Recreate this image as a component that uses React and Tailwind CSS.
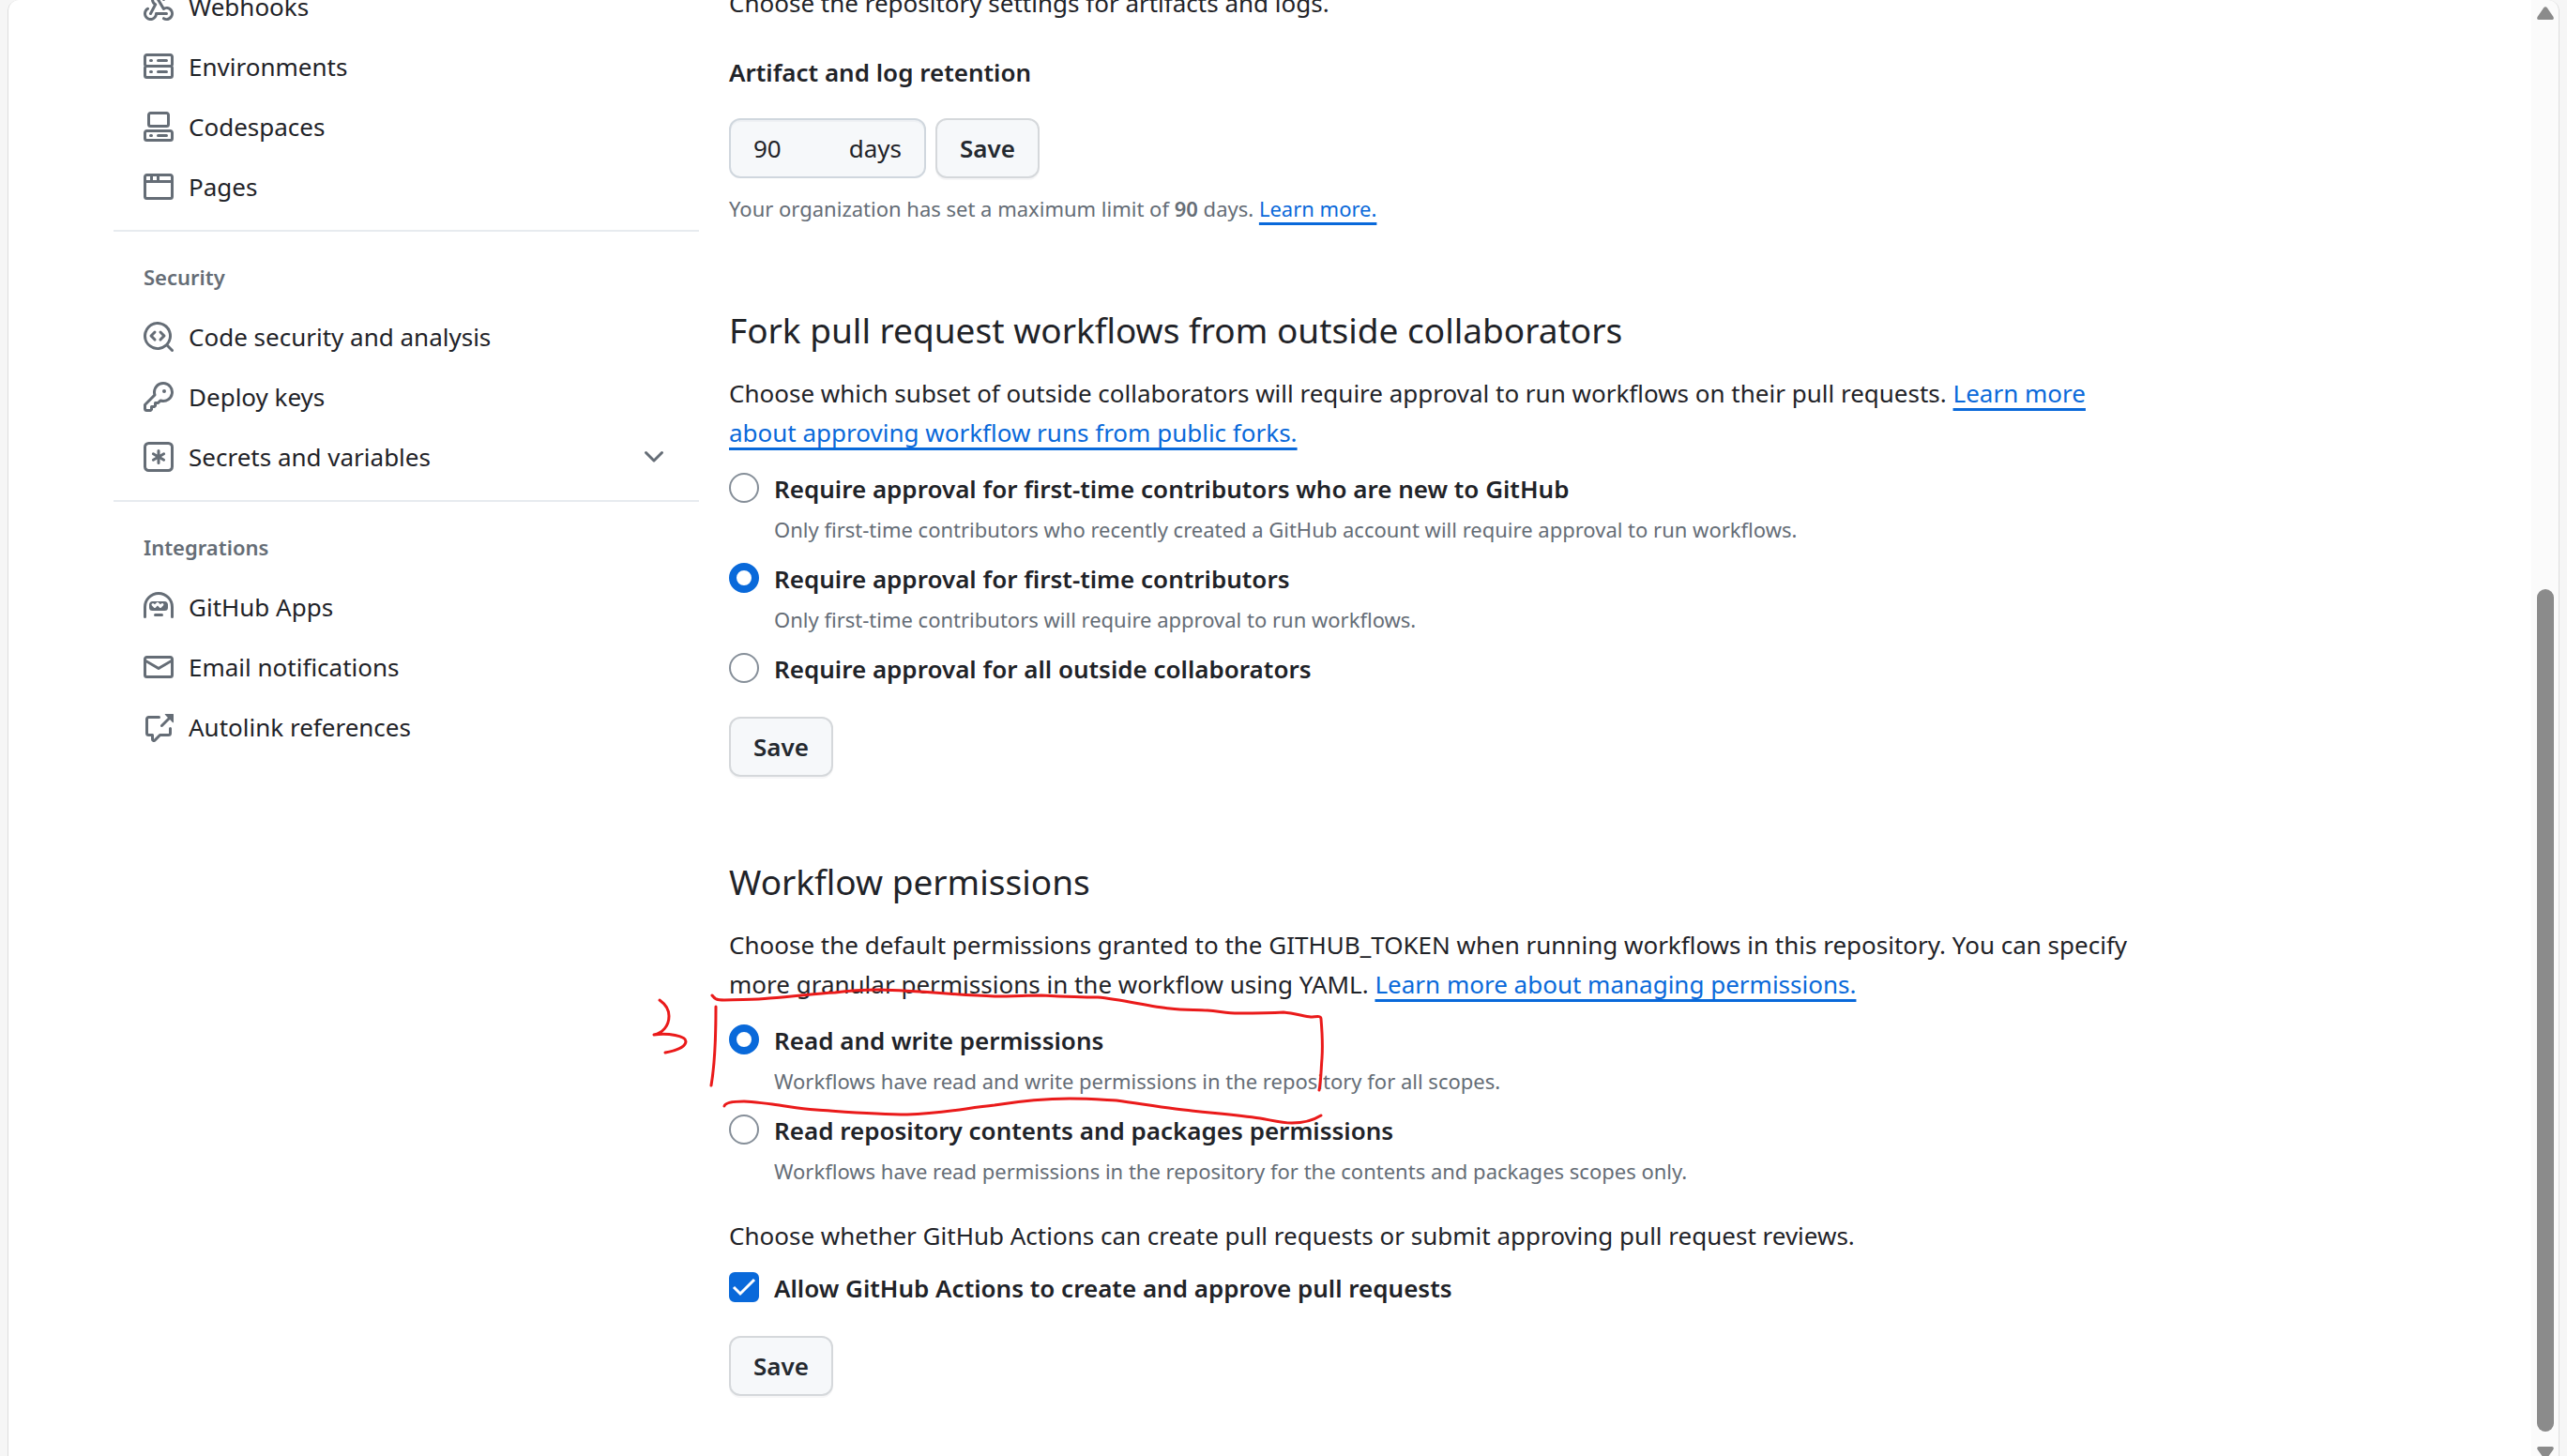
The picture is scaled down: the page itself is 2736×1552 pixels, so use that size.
const ICONS = {
  webhook: [
    "M5.5 4.25a2.25 2.25 0 0 1 4.5 0 .75.75 0 0 0 1.5 0 3.75 3.75 0 1 0-6.14 2.889l-2.272 4.258a.75.75 0 0 0 1.324.706L7 7.25a.75.75 0 0 0-.309-1.015A2.25 2.25 0 0 1 5.5 4.25Z",
    "M7.364 3.607a.75.75 0 0 1 1.03.257l2.608 4.349a3.75 3.75 0 1 1-.628 6.785.75.75 0 0 1 .752-1.299 2.25 2.25 0 1 0-.033-3.88.75.75 0 0 1-1.03-.256L7.107 4.636a.75.75 0 0 1 .257-1.03Z",
    "M2.9 8.776A.75.75 0 0 1 2.625 9.8 2.25 2.25 0 1 0 6 11.75a.75.75 0 0 1 .75-.751h5.5a.75.75 0 0 1 0 1.5H7.425a3.751 3.751 0 1 1-5.55-3.998.75.75 0 0 1 1.024.274Z",
  ],
  server: [
    "M1.75 1h12.5c.966 0 1.75.784 1.75 1.75v4c0 .372-.116.717-.314 1 .198.283.314.628.314 1v4a1.75 1.75 0 0 1-1.75 1.75H1.75A1.75 1.75 0 0 1 0 12.75v-4c0-.358.109-.707.314-1a1.739 1.739 0 0 1-.314-1v-4C0 1.784.784 1 1.75 1ZM1.5 2.75v4c0 .138.112.25.25.25h12.5a.25.25 0 0 0 .25-.25v-4a.25.25 0 0 0-.25-.25H1.75a.25.25 0 0 0-.25.25Zm.25 5.75a.25.25 0 0 0-.25.25v4c0 .138.112.25.25.25h12.5a.25.25 0 0 0 .25-.25v-4a.25.25 0 0 0-.25-.25ZM7 4.75A.75.75 0 0 1 7.75 4h4.5a.75.75 0 0 1 0 1.5h-4.5A.75.75 0 0 1 7 4.75ZM7.75 10h4.5a.75.75 0 0 1 0 1.5h-4.5a.75.75 0 0 1 0-1.5ZM3 4.75A.75.75 0 0 1 3.75 4h.5a.75.75 0 0 1 0 1.5h-.5A.75.75 0 0 1 3 4.75ZM3.75 10h.5a.75.75 0 0 1 0 1.5h-.5a.75.75 0 0 1 0-1.5Z",
  ],
  codespaces: [
    "M0 11.25c0-.966.784-1.75 1.75-1.75h12.5c.966 0 1.75.784 1.75 1.75v3A1.75 1.75 0 0 1 14.25 16H1.75A1.75 1.75 0 0 1 0 14.25Zm2-9.5C2 .784 2.784 0 3.75 0h8.5C13.216 0 14 .784 14 1.75v5a1.75 1.75 0 0 1-1.75 1.75h-8.5A1.75 1.75 0 0 1 2 6.75Zm1.75-.25a.25.25 0 0 0-.25.25v5c0 .138.112.25.25.25h8.5a.25.25 0 0 0 .25-.25v-5a.25.25 0 0 0-.25-.25Zm-2 9.5a.25.25 0 0 0-.25.25v3c0 .138.112.25.25.25h12.5a.25.25 0 0 0 .25-.25v-3a.25.25 0 0 0-.25-.25Z",
    "M7 12.75a.75.75 0 0 1 .75-.75h4.5a.75.75 0 0 1 0 1.5h-4.5a.75.75 0 0 1-.75-.75Zm-4 0a.75.75 0 0 1 .75-.75h.5a.75.75 0 0 1 0 1.5h-.5a.75.75 0 0 1-.75-.75Z",
  ],
  browser: [
    "M0 2.75C0 1.784.784 1 1.75 1h12.5c.966 0 1.75.784 1.75 1.75v10.5A1.75 1.75 0 0 1 14.25 15H1.75A1.75 1.75 0 0 1 0 13.25ZM14.5 6h-13v7.25c0 .138.112.25.25.25h12.5a.25.25 0 0 0 .25-.25Zm-6-3.5v2h6V2.75a.25.25 0 0 0-.25-.25ZM5 2.5v2h2v-2Zm-3.25 0a.25.25 0 0 0-.25.25V4.5h2v-2Z",
  ],
  codescan: [
    "M8.47 4.97a.75.75 0 0 0 0 1.06L9.94 7.5 8.47 8.97a.75.75 0 1 0 1.06 1.06l2-2a.75.75 0 0 0 0-1.06l-2-2a.75.75 0 0 0-1.06 0ZM6.53 6.03a.75.75 0 0 0-1.06-1.06l-2 2a.75.75 0 0 0 0 1.06l2 2a.75.75 0 1 0 1.06-1.06L5.06 7.5l1.47-1.47Z",
    "M12.246 13.307a7.501 7.501 0 1 1 1.06-1.06l2.474 2.473a.749.749 0 1 1-1.06 1.06l-2.474-2.473ZM1.5 7.5a6.002 6.002 0 0 0 3.608 5.504 6.002 6.002 0 0 0 6.486-1.117.748.748 0 0 1 .292-.293A6 6 0 1 0 1.5 7.5Z",
  ],
  key: [
    "M10.5 0a5.499 5.499 0 1 1-1.288 10.848l-.932.932a.749.749 0 0 1-.53.22H7v.75a.749.749 0 0 1-.22.53l-.5.5a.749.749 0 0 1-.53.22H5v.75a.749.749 0 0 1-.22.53l-.5.5a.749.749 0 0 1-.53.22h-2A1.75 1.75 0 0 1 0 14.25v-2c0-.199.079-.389.22-.53l4.932-4.932A5.5 5.5 0 0 1 10.5 0Zm-4 5.5c-.001.431.069.86.205 1.269a.75.75 0 0 1-.181.768L1.5 12.56v1.69c0 .138.112.25.25.25h1.69l.06-.06v-1.19a.75.75 0 0 1 .75-.75h1.19l.06-.06v-1.19a.75.75 0 0 1 .75-.75h1.19l1.023-1.025a.75.75 0 0 1 .768-.18A4 4 0 1 0 6.5 5.5ZM11 6a1 1 0 1 1 0-2 1 1 0 0 1 0 2Z",
  ],
  asterisk: [
    "M0 2.75A2.75 2.75 0 0 1 2.75 0h10.5A2.75 2.75 0 0 1 16 2.75v10.5A2.75 2.75 0 0 1 13.25 16H2.75A2.75 2.75 0 0 1 0 13.25ZM2.75 1.5c-.69 0-1.25.56-1.25 1.25v10.5c0 .69.56 1.25 1.25 1.25h10.5c.69 0 1.25-.56 1.25-1.25V2.75c0-.69-.56-1.25-1.25-1.25Z",
    "M8 4a.75.75 0 0 1 .75.75V6.7l1.69-.975a.75.75 0 0 1 .75 1.3L9.5 8l1.69.976a.75.75 0 0 1-.75 1.298L8.75 9.3v1.951a.75.75 0 0 1-1.5 0V9.299l-1.69.976a.75.75 0 0 1-.75-1.3L6.5 8l-1.69-.975a.75.75 0 0 1 .75-1.3l1.69.976V4.75A.75.75 0 0 1 8 4Z",
  ],
  hubot: [
    "M0 8a8 8 0 1 1 16 0v5.25a.75.75 0 0 1-1.5 0V8a6.5 6.5 0 1 0-13 0v5.25a.75.75 0 0 1-1.5 0Zm5.5 4.25a.75.75 0 0 1 .75-.75h3.5a.75.75 0 0 1 0 1.5h-3.5a.75.75 0 0 1-.75-.75ZM3 6.75C3 5.784 3.784 5 4.75 5h6.5c.966 0 1.75.784 1.75 1.75v1.5A1.75 1.75 0 0 1 11.25 10h-6.5A1.75 1.75 0 0 1 3 8.25Zm1.47-.53a.75.75 0 0 0 0 1.06l.97.97a.75.75 0 0 0 1.06 0l.97-.97.97.97a.75.75 0 0 0 1.06 0l.97-.97a.749.749 0 0 0-.326-1.275.749.749 0 0 0-.734.215l-.44.44-.97-.97a.75.75 0 0 0-1.06 0l-.97.97-.44-.44a.75.75 0 0 0-1.06 0Z",
  ],
  mail: [
    "M1.75 2h12.5c.966 0 1.75.784 1.75 1.75v8.5A1.75 1.75 0 0 1 14.25 14H1.75A1.75 1.75 0 0 1 0 12.25v-8.5C0 2.784.784 2 1.75 2ZM1.5 12.251c0 .138.112.25.25.25h12.5a.25.25 0 0 0 .25-.25V5.809L8.38 9.397a.75.75 0 0 1-.76 0L1.5 5.809v6.442Zm13-8.181v-.32a.25.25 0 0 0-.25-.25H1.75a.25.25 0 0 0-.25.25v.32L8 7.88Z",
  ],
  crossReference: [
    "M2.75 3.5a.25.25 0 0 0-.25.25v7.5c0 .138.112.25.25.25h2a.75.75 0 0 1 .75.75v2.19l2.72-2.72a.749.749 0 0 1 .53-.22h4.5a.25.25 0 0 0 .25-.25v-2.5a.75.75 0 0 1 1.5 0v2.5A1.75 1.75 0 0 1 13.25 13H9.06l-2.573 2.573A1.458 1.458 0 0 1 4 14.543V13H2.75A1.75 1.75 0 0 1 1 11.25v-7.5C1 2.784 1.784 2 2.75 2h5.5a.75.75 0 0 1 0 1.5ZM16 1.25v4.146a.25.25 0 0 1-.427.177L14.03 4.03l-3.75 3.75a.749.749 0 0 1-1.275-.326.749.749 0 0 1 .215-.734l3.75-3.75-1.543-1.543A.25.25 0 0 1 11.604 1h4.146a.25.25 0 0 1 .25.25Z",
  ],
  chevron: [
    "M12.78 5.22a.749.749 0 0 1 0 1.06l-4.25 4.25a.749.749 0 0 1-1.06 0L3.22 6.28a.749.749 0 1 1 1.06-1.06L8 8.939l3.72-3.719a.749.749 0 0 1 1.06 0Z",
  ],
};

function Icon({ name }) {
  return (
    <svg viewBox="0 0 16 16" className="size-8 shrink-0 fill-[#656d76]" aria-hidden="true">
      {ICONS[name].map((d) => (
        <path key={d} d={d} />
      ))}
    </svg>
  );
}

const NAV = [
  {
    items: [
      ["webhook", "Webhooks"],
      ["server", "Environments"],
      ["codespaces", "Codespaces"],
      ["browser", "Pages"],
    ],
  },
  {
    title: "Security",
    items: [
      ["codescan", "Code security and analysis"],
      ["key", "Deploy keys"],
      ["asterisk", "Secrets and variables", true],
    ],
  },
  {
    title: "Integrations",
    items: [
      ["hubot", "GitHub Apps"],
      ["mail", "Email notifications"],
      ["crossReference", "Autolink references"],
    ],
  },
];

function NavItem({ icon, label, expandable }) {
  const row = "flex h-16 w-full items-center gap-4 px-8 text-left";
  const content = (
    <>
      <Icon name={icon} />
      <span className="grow">{label}</span>
    </>
  );
  return (
    <li>
      {expandable ? (
        <button type="button" aria-expanded="false" className={row}>
          {content}
          <Icon name="chevron" />
        </button>
      ) : (
        <a href="#" className={row}>
          {content}
        </a>
      )}
    </li>
  );
}

function Sidebar() {
  return (
    <nav aria-label="Repository settings" className="-mt-[25px] w-[624px] shrink-0">
      {NAV.map(({ title, items }) => (
        <section key={items[0][1]}>
          {title && (
            <h3 className="mt-[14px] border-t-2 border-[#e7ebef] px-8 pt-8 pb-4 text-[22px] leading-8 font-semibold text-[#656d76]">
              {title}
            </h3>
          )}
          <ul>
            {items.map(([icon, label, expandable]) => (
              <NavItem key={label} icon={icon} label={label} expandable={expandable} />
            ))}
          </ul>
        </section>
      ))}
    </nav>
  );
}

function Link({ children }) {
  return (
    <a href="#" className="text-[#0969da] underline decoration-[3px] underline-offset-[6px]">
      {children}
    </a>
  );
}

function SaveButton() {
  return (
    <button
      type="submit"
      className="h-16 rounded-xl border-2 border-[#d5d8db] bg-[#f6f8fa] px-6 font-semibold text-[#24292f] shadow-[0_2px_0_#1f23280a]"
    >
      Save
    </button>
  );
}

function RadioOption({ name, label, note, checked }) {
  return (
    <div className="flex gap-4">
      <input
        type="radio"
        id={label}
        name={name}
        defaultChecked={checked}
        className="mt-1 size-8 shrink-0 appearance-none rounded-full border-2 border-[#868f99] bg-white checked:border-8 checked:border-[#0969da]"
      />
      <div>
        <label htmlFor={label} className="block font-semibold">
          {label}
        </label>
        {note && <p className="mt-1 mb-[14px] text-[22px] leading-9 text-[#656d76]">{note}</p>}
      </div>
    </div>
  );
}

function SectionTitle({ children }) {
  return <h2 className="mt-[82px] mb-4 text-[37px] leading-[60px]">{children}</h2>;
}

/* Hand-drawn step number and frame around the first permission option. */
function PenMarks() {
  return (
    <svg
      viewBox="690 1050 730 160"
      className="pointer-events-none absolute -top-10 left-[-87px] h-[160px] w-[730px] fill-none stroke-[#ea1a1a]"
      strokeWidth="3"
      strokeLinecap="round"
      strokeLinejoin="round"
      aria-hidden="true"
    >
      <path d="M703 1068C710 1073 713 1079 713 1085C713 1096 706 1103 697 1105C712 1103 731 1106 731 1112C731 1118 720 1122 709 1124" />
      <path d="M763 1075C763 1105 762 1136 758 1159" />
      <path d="M759 1063C762 1067 764 1068 772 1068C790 1067 805 1068 820 1066C850 1064 868 1061 890 1060C910 1057 925 1057 937 1057C985 1058 1020 1063 1060 1064C1080 1064 1095 1063 1110 1063C1130 1064 1152 1065 1170 1065C1195 1067 1225 1075 1247 1077C1262 1079 1275 1078 1287 1079C1300 1080 1308 1082 1320 1082C1340 1082 1352 1082 1368 1081C1378 1082 1390 1085 1397 1086C1402 1086 1408 1084 1408 1088C1409 1100 1410 1115 1409 1130C1408 1142 1408 1155 1406 1164" />
      <path d="M772 1181C773 1177 784 1176 793 1176C803 1176 812 1178 823 1179C840 1181 850 1184 870 1185C900 1187 935 1190 967 1190C1005 1189 1030 1183 1060 1180C1085 1176 1110 1173 1140 1173C1160 1173 1172 1174 1190 1175C1212 1178 1230 1181 1253 1184C1285 1188 1315 1190 1343 1194C1355 1196 1366 1199 1377 1199C1390 1199 1400 1196 1408 1191" />
    </svg>
  );
}

function Main() {
  return (
    <main className="-mt-[18px] max-w-[1512px] grow">
      <p>Choose the repository settings for artifacts and logs.</p>

      <form>
        <label htmlFor="retention" className="mt-8 block font-semibold">
          Artifact and log retention
        </label>
        <div className="mt-7 flex gap-[10px]">
          <div className="flex h-16 w-[210px] items-center justify-between rounded-xl border-2 border-[#d0d7de] bg-[#f6f8fa] px-6 shadow-[inset_0_2px_0_#d0d7de33]">
            <input id="retention" type="text" defaultValue="90" className="w-20 bg-transparent outline-none" />
            <span>days</span>
          </div>
          <SaveButton />
        </div>
        <p className="mt-[14px] text-[22px] leading-9 text-[#656d76]">
          Your organization has set a maximum limit of <strong className="font-semibold">90</strong> days.{" "}
          <Link>Learn more.</Link>
        </p>
      </form>

      <form>
        <SectionTitle>Fork pull request workflows from outside collaborators</SectionTitle>
        <p>
          Choose which subset of outside collaborators will require approval to run workflows on their pull requests.{" "}
          <Link>Learn more about approving workflow runs from public forks.</Link>
        </p>
        <div className="mt-[18px] mb-[30px]">
          <RadioOption
            name="approval"
            label="Require approval for first-time contributors who are new to GitHub"
            note="Only first-time contributors who recently created a GitHub account will require approval to run workflows."
          />
          <RadioOption
            name="approval"
            label="Require approval for first-time contributors"
            note="Only first-time contributors will require approval to run workflows."
            checked
          />
          <RadioOption name="approval" label="Require approval for all outside collaborators" />
        </div>
        <SaveButton />
      </form>

      <form>
        <SectionTitle>Workflow permissions</SectionTitle>
        <p>
          Choose the default permissions granted to the GITHUB_TOKEN when running workflows in this repository. You can
          specify more granular permissions in the workflow using YAML.{" "}
          <Link>Learn more about managing permissions.</Link>
        </p>
        <div className="relative mt-[18px]">
          <RadioOption
            name="permissions"
            label="Read and write permissions"
            note="Workflows have read and write permissions in the repository for all scopes."
            checked
          />
          <RadioOption
            name="permissions"
            label="Read repository contents and packages permissions"
            note="Workflows have read permissions in the repository for the contents and packages scopes only."
          />
          <PenMarks />
        </div>
        <p className="mt-4">Choose whether GitHub Actions can create pull requests or submit approving pull request reviews.</p>
        <div className="mt-[14px] mb-[30px] flex gap-4">
          <span className="relative mt-1 size-8 shrink-0">
            <input
              id="allow-actions"
              type="checkbox"
              defaultChecked
              className="peer block size-8 appearance-none rounded-md border-2 border-[#868f99] checked:border-[#0969da] checked:bg-[#0969da]"
            />
            <svg
              viewBox="0 0 32 32"
              className="pointer-events-none absolute inset-0 hidden size-8 fill-none stroke-white peer-checked:block"
              strokeWidth="3"
              aria-hidden="true"
            >
              <path d="M5 16l7 7L27 8" />
            </svg>
          </span>
          <label htmlFor="allow-actions" className="font-semibold">
            Allow GitHub Actions to create and approve pull requests
          </label>
        </div>
        <SaveButton />
      </form>
    </main>
  );
}

function Scrollbar() {
  return (
    <div className="flex w-[30px] shrink-0 flex-col items-center rounded-tr-xl border-r border-[#dedede] bg-[#fbfbfb] pt-[7px]" aria-hidden="true">
      <svg viewBox="0 0 18 14" className="h-[14px] w-[18px] shrink-0 fill-[#8b8b8b]">
        <path d="M7 1.500Q9-1 11 1.500L17.500 11Q18.500 14 16 14H2Q-.5 14 .5 11Z" />
      </svg>
      <div className="flex min-h-0 w-[18px] grow flex-col pb-4">
        <div className="h-[607px] shrink" />
        <div className="grow rounded-full bg-[#8b8b8b]" />
      </div>
      <svg viewBox="0 0 18 10" className="h-[10px] w-[18px] shrink-0 fill-[#8b8b8b]">
        <path d="M2 0H16Q18.500 0 17.500 3L12.500 10H5.500L.5 3Q-.5 0 2 0Z" />
      </svg>
    </div>
  );
}

export default function App() {
  return (
    <div className="flex h-screen overflow-hidden bg-[#f6f6f6] px-2 font-['Noto_Sans','Open_Sans',sans-serif] text-[26px] leading-[42px] text-[#1f2328]">
      <div className="flex min-w-0 grow gap-8 rounded-tl-xl border-l border-[#dedede] bg-white pl-28">
        <Sidebar />
        <Main />
      </div>
      <Scrollbar />
    </div>
  );
}
